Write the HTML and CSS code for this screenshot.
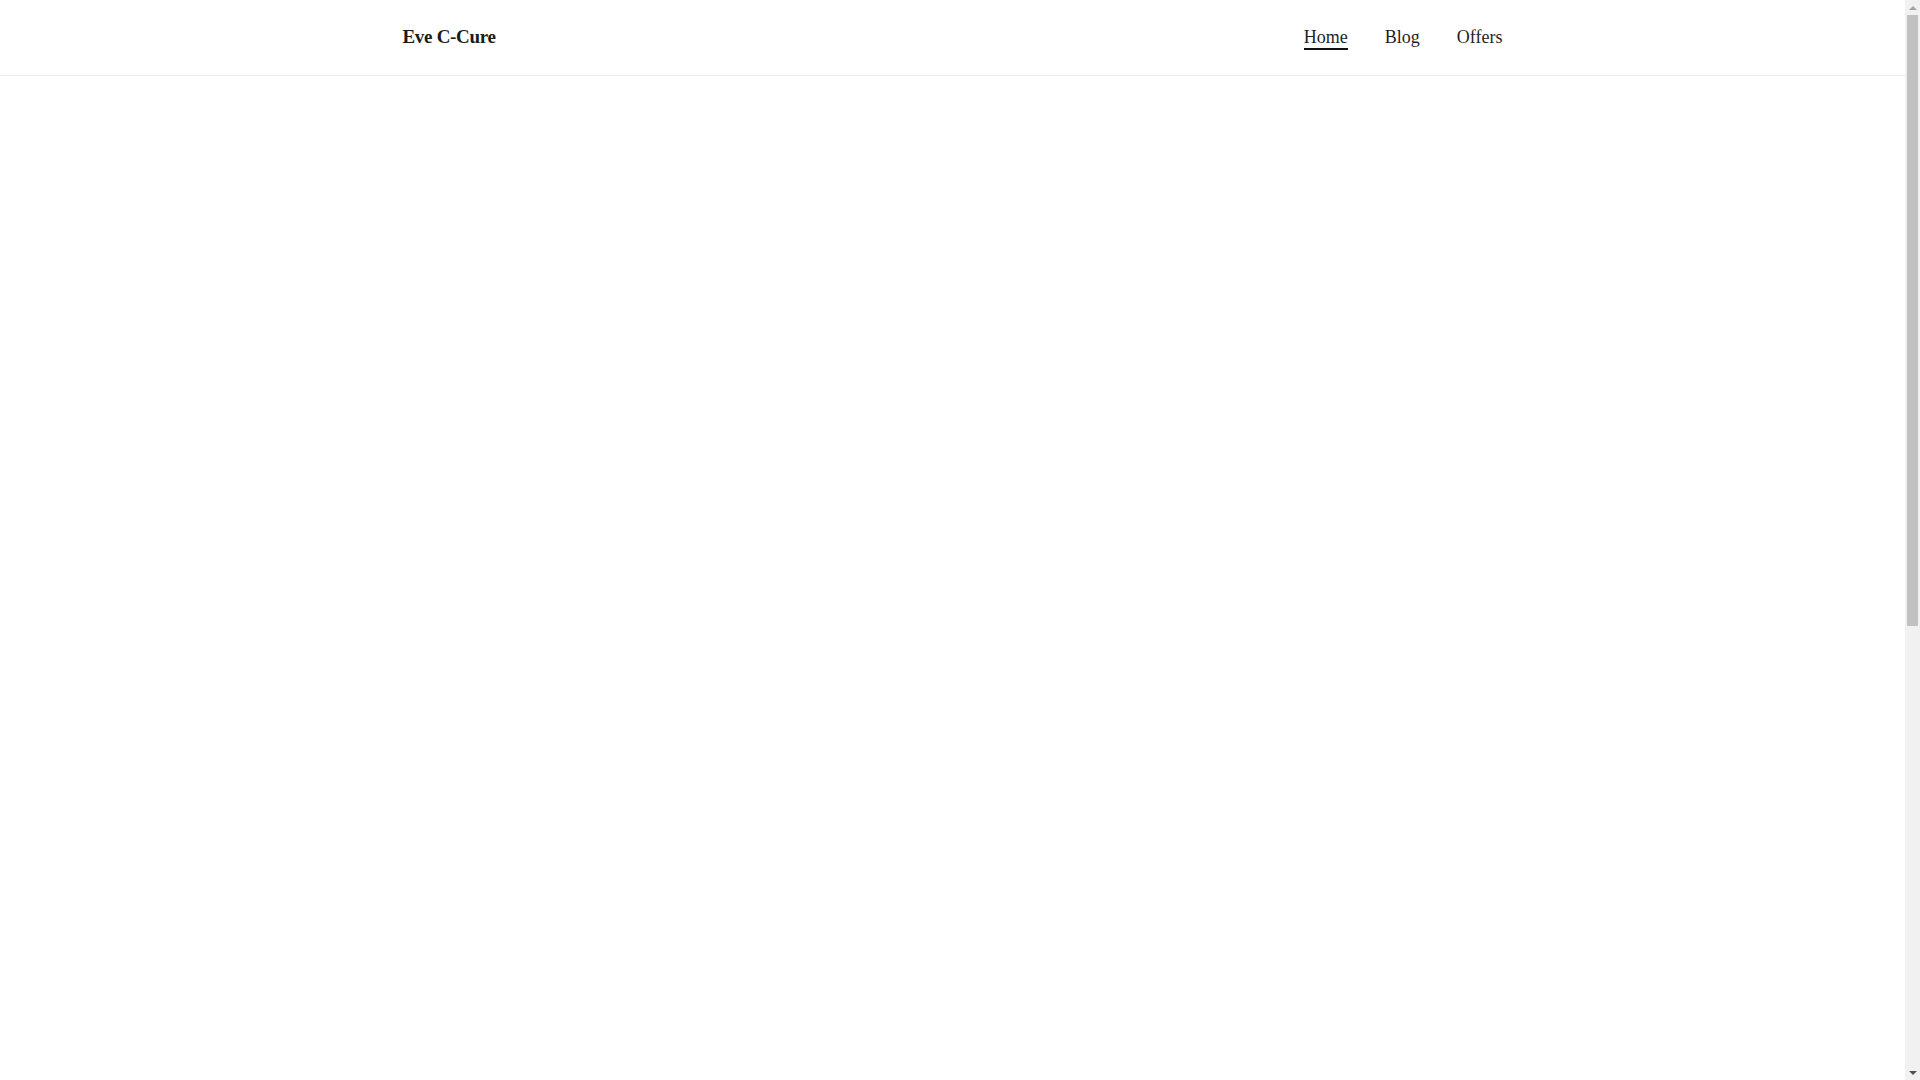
FILE: index.html
```html
<!DOCTYPE html>
<html lang="en">
<head>
<meta charset="utf-8">
<title>Eve C-Cure</title>
<link rel="stylesheet" href="styles.css">
</head>
<body>
<div class="page">
  <header class="site-header">
    <div class="container header-inner">
      <a class="brand" href="#">Eve C-Cure</a>
      <nav class="main-nav">
        <a class="nav-link active" href="#">Home</a>
        <a class="nav-link" href="#">Blog</a>
        <a class="nav-link" href="#">Offers</a>
      </nav>
    </div>
  </header>
  <main class="page-body"></main>
</div>
<div class="scrollbar" aria-hidden="true">
  <div class="sb-arrow sb-up"></div>
  <div class="sb-track"><div class="sb-thumb"></div></div>
  <div class="sb-arrow sb-down"></div>
</div>
</body>
</html>
```
FILE: styles.css
```css
html, body {
  margin: 0;
  padding: 0;
  background: #ffffff;
}
body {
  font-family: "Liberation Serif", "DejaVu Serif", serif;
  color: #222222;
}
.page {
  margin-right: 15px;
}
.site-header {
  height: 75px;
  border-bottom: 1px solid #ededed;
  background: #ffffff;
}
.container {
  max-width: 1100px;
  margin: 0 auto;
}
.header-inner {
  height: 100%;
  display: flex;
  align-items: center;
  justify-content: space-between;
}
.brand {
  font-size: 19px;
  font-weight: 700;
  line-height: 24px;
  padding-bottom: 2px;
  color: #1a1a1a;
  text-decoration: none;
  letter-spacing: -0.3px;
}
.main-nav {
  display: flex;
  align-items: center;
  gap: 37px;
}
.nav-link {
  display: inline-block;
  font-size: 18px;
  line-height: 22px;
  color: #1f1f1f;
  text-decoration: none;
  border-bottom: 2px solid transparent;
}
.nav-link.active {
  border-bottom-color: #111111;
}
.page-body {
  height: 1780px;
}

/* decorative page scrollbar */
.scrollbar {
  position: fixed;
  top: 0;
  right: 0;
  width: 15px;
  height: 100vh;
  background: #f1f1f1;
  display: flex;
  flex-direction: column;
}
.sb-arrow {
  height: 15px;
  flex: 0 0 15px;
  display: flex;
  align-items: center;
  justify-content: center;
}
.sb-up::before {
  content: "";
  width: 0;
  height: 0;
  border-left: 4px solid transparent;
  border-right: 4px solid transparent;
  border-bottom: 4px solid #a3a3a3;
}
.sb-down::before {
  content: "";
  width: 0;
  height: 0;
  border-left: 4px solid transparent;
  border-right: 4px solid transparent;
  border-top: 4px solid #505050;
}
.sb-track {
  flex: 1;
  padding: 0 2px;
}
.sb-thumb {
  height: 611px;
  background: #c1c1c1;
}
```
